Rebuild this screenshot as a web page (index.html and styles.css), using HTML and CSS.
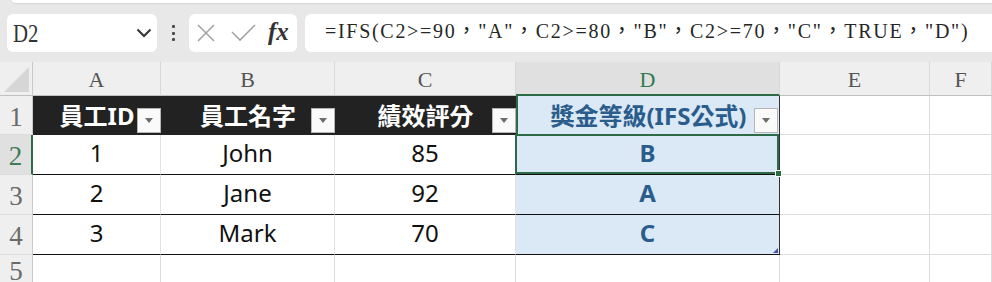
FILE: index.html
```html
<!DOCTYPE html>
<html lang="zh-Hant">
<head>
<meta charset="utf-8">
<title>IFS</title>
<link rel="stylesheet" href="styles.css">
</head>
<body>
<div class="edge"></div>
<div class="fbar">
  <div class="namebox">
    <span class="ref">D2</span>
    <svg class="chev" width="16" height="10" viewBox="0 0 16 10"><polyline points="1.5,1.5 8,8 14.5,1.5" fill="none" stroke="#333" stroke-width="2"/></svg>
  </div>
  <div class="grip"><i></i><i></i><i></i></div>
  <div class="fxbox">
    <svg class="ico-x" width="20" height="18" viewBox="0 0 20 18"><path d="M2 1 L18 17 M18 1 L2 17" stroke="#a4a4a4" stroke-width="1.6" fill="none"/></svg>
    <svg class="ico-ok" width="25" height="18" viewBox="0 0 25 18"><polyline points="1,8 9,16 24,1" fill="none" stroke="#a4a4a4" stroke-width="1.6"/></svg>
    <span class="fx">fx</span>
  </div>
  <div class="formula">=IFS(C2&gt;=90<span class="fw">，</span>"A"<span class="fw">，</span>C2&gt;=80<span class="fw">，</span>"B"<span class="fw">，</span>C2&gt;=70<span class="fw">，</span>"C"<span class="fw">，</span>TRUE<span class="fw">，</span>"D")</div>
</div>
<div class="sheet">
  <div class="corner"><span class="tri"></span></div>
  <div class="ch">A</div>
  <div class="ch">B</div>
  <div class="ch">C</div>
  <div class="ch sel">D</div>
  <div class="ch">E</div>
  <div class="ch">F</div>

  <div class="rh">1</div>
  <div class="th">員工ID<span class="flt"></span></div>
  <div class="th">員工名字<span class="flt"></span></div>
  <div class="th">績效評分<span class="flt"></span></div>
  <div class="th d">獎金等級(IFS公式)<span class="flt"></span></div>
  <div class="gc"></div>
  <div class="gc"></div>

  <div class="rh sel">2</div>
  <div class="td">1</div>
  <div class="td">John</div>
  <div class="td">85</div>
  <div class="td d active">B<span class="handle"></span></div>
  <div class="gc"></div>
  <div class="gc"></div>

  <div class="rh">3</div>
  <div class="td">2</div>
  <div class="td">Jane</div>
  <div class="td">92</div>
  <div class="td d">A</div>
  <div class="gc"></div>
  <div class="gc"></div>

  <div class="rh">4</div>
  <div class="td">3</div>
  <div class="td">Mark</div>
  <div class="td">70</div>
  <div class="td d last">C</div>
  <div class="gc"></div>
  <div class="gc"></div>

  <div class="rh">5</div>
  <div class="gc"></div>
  <div class="gc"></div>
  <div class="gc"></div>
  <div class="gc"></div>
  <div class="gc"></div>
  <div class="gc"></div>
</div>
</body>
</html>
```
FILE: styles.css
```css
* { box-sizing: border-box; }
body {
  margin: 0;
  width: 992px;
  height: 282px;
  overflow: hidden;
  background: #e8e8e8;
  font-family: "Noto Sans", "Noto Sans CJK TC", sans-serif;
}
.edge {
  height: 3px;
  margin-left: 12px;
  background: #fff;
  border-radius: 0 0 0 6px;
  box-shadow: 0 1px 0 #d8d8d8;
}
.fbar {
  display: flex;
  align-items: center;
  height: 38px;
  margin-top: 11px;
  padding-left: 7px;
}
.namebox {
  width: 150px;
  height: 38px;
  background: #fff;
  border-radius: 6px;
  display: flex;
  align-items: center;
  justify-content: space-between;
  padding: 0 5px 0 6px;
}
.ref {
  font-family: "Liberation Serif", serif;
  font-size: 26px;
  color: #333;
  display: inline-block;
  transform: scaleX(0.8);
  transform-origin: left center;
  margin-top: 1px;
}
.grip {
  width: 32px;
  display: flex;
  flex-direction: column;
  align-items: center;
  gap: 3.5px;
}
.grip i {
  width: 3px;
  height: 3px;
  background: #4a4a4a;
  border-radius: 1px;
}
.fxbox {
  width: 108px;
  height: 38px;
  background: #fff;
  border-radius: 6px;
  display: flex;
  align-items: center;
  padding-left: 7px;
}
.ico-ok { margin-left: 15px; margin-top: -1px; }
.fx {
  margin-left: 12px;
  font-family: "Liberation Serif", serif;
  font-style: italic;
  font-weight: 700;
  font-size: 25px;
  color: #333;
  margin-top: -3px;
}
.formula {
  flex: 1;
  margin-left: 8px;
  margin-right: -20px;
  height: 38px;
  background: #fff;
  border-radius: 6px;
  padding-left: 20px;
  font-family: "Liberation Serif", "Noto Sans CJK TC", serif;
  font-size: 20px;
  letter-spacing: 1.7px;
  line-height: 32px;
  color: #262626;
  white-space: nowrap;
  overflow: hidden;
}
.fw { font-family: "Noto Sans CJK TC", sans-serif; }

.sheet {
  margin-top: 10px;
  display: grid;
  grid-template-columns: 33px 128px 174px 181px 264px 150px 62px;
  grid-template-rows: 34px 39px 40px 40px 40px 30px;
  background: #fff;
}
.sheet > div {
  position: relative;
  display: flex;
  align-items: center;
  justify-content: center;
}
.corner {
  background: #efefef;
  border-right: 1px solid #c9c9c9;
  border-bottom: 1px solid #c0c0c0;
}
.tri {
  position: absolute;
  right: 3px;
  bottom: 3px;
  width: 0;
  height: 0;
  border-left: 25px solid transparent;
  border-bottom: 25px solid #d6d6d6;
}
.ch {
  background: #efefef;
  border-right: 1px solid #d8d8d8;
  border-bottom: 1px solid #bfbfbf;
  font-family: "Liberation Serif", serif;
  font-size: 22px;
  color: #555;
  padding-top: 3px;
}
.ch.sel {
  background: #e0e0e0;
  color: #2f7a50;
  border-bottom: 2px solid #2d6b47;
}
.rh {
  background: #efefef;
  border-right: 1px solid #c9c9c9;
  border-bottom: 1px solid #dcdcdc;
  font-family: "Liberation Serif", serif;
  font-size: 27px;
  color: #6a6a6a;
  padding-top: 4px;
}
.rh.sel {
  background: #e0e0e0;
  color: #3d7a58;
  border-right: 2px solid #2d6b47;
}
.th {
  background: #222;
  color: #fff;
  font-weight: 700;
  font-size: 24px;
  padding-bottom: 2px;
}
.th.d {
  background: #dbe8f6;
  color: #2a5d8b;
  border-left: 2px solid #2d6b47;
  border-right: 1px solid #333;
}
.flt {
  position: absolute;
  right: 0;
  bottom: 2px;
  width: 24px;
  height: 25px;
  background: #fafafa;
  border: 1px solid #b5b5b5;
  display: flex;
  align-items: center;
  justify-content: center;
}
.th.d .flt { right: 1px; }
.flt::before {
  content: "";
  width: 0;
  height: 0;
  border-left: 4px solid transparent;
  border-right: 4px solid transparent;
  border-top: 5px solid #6e6e6e;
}
.td {
  font-size: 24px;
  color: #111;
  border-right: 1px solid #e3e3e3;
  border-bottom: 1px solid #111;
  padding-bottom: 4px;
}
.td.d {
  background: #dbe8f6;
  color: #2a5d8b;
  font-weight: 700;
  border-right: 1px solid #333;
}
.td.active::after {
  content: "";
  position: absolute;
  top: -1px;
  left: -1px;
  right: 0;
  bottom: 0;
  border: 2px solid #2d6b47;
}
.handle {
  position: absolute;
  right: -3px;
  bottom: -3px;
  width: 7px;
  height: 7px;
  background: #2d6b47;
  border: 1px solid #fff;
  z-index: 2;
}
.td.last::after {
  content: "";
  position: absolute;
  right: 1px;
  bottom: 1px;
  width: 0;
  height: 0;
  border-left: 5px solid transparent;
  border-bottom: 5px solid #4b50a3;
}
.gc {
  border-right: 1px solid #dcdcdc;
  border-bottom: 1px solid #dcdcdc;
}
```
